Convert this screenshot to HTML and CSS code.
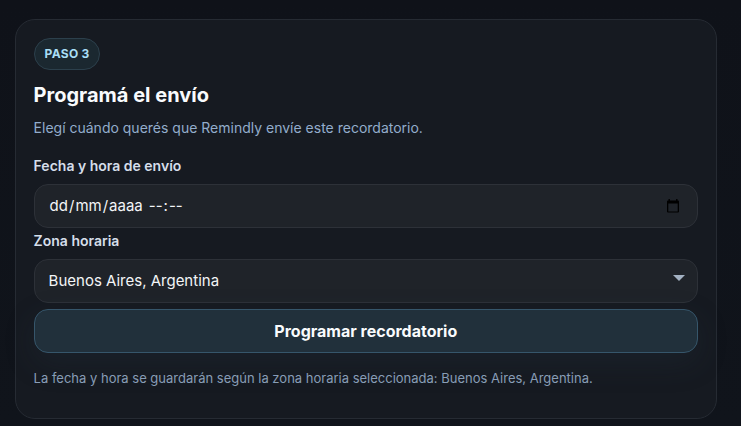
FILE: index.html
```html
<!DOCTYPE html>
<html lang="es">
<head>
    <meta charset="utf-8">
    <title>Programar recordatorio</title>
    <link rel="stylesheet" href="styles.css">
</head>
<body>
    <section class="card">
        <span class="step-pill">PASO 3</span>
        <h2 class="card-title">Programá el envío</h2>
        <p class="card-text">Elegí cuándo querés que Remindly envíe este recordatorio.</p>

        <form class="schedule-form">
            <label class="field-label">Fecha y hora de envío</label>
            <div class="field date-field">
                <span class="date-part">dd</span>/<span class="date-part">mm</span>/<span class="date-part">aaaa</span>
                <span class="time-gap"></span>
                <span class="date-part">--</span>:<span class="date-part">--</span>
                <svg class="calendar-icon" width="14" height="14" viewBox="0 0 14 14">
                    <path d="M3.2 0v2M10.8 0v2" stroke="#000" stroke-width="1.4" fill="none"/>
                    <path d="M2 1.5h10a1 1 0 0 1 1 1v10a1 1 0 0 1-1 1H2a1 1 0 0 1-1-1v-10a1 1 0 0 1 1-1zM2.3 4.6v7.8h9.4V4.6z" fill="#000" fill-rule="evenodd"/>
                </svg>
            </div>

            <label class="field-label zone-label">Zona horaria</label>
            <div class="field select-field">
                <span>Buenos Aires, Argentina</span>
                <span class="select-arrow"></span>
            </div>

            <button type="button" class="submit-button">Programar recordatorio</button>
        </form>

        <p class="card-note">La fecha y hora se guardarán según la zona horaria seleccionada: Buenos Aires, Argentina.</p>
    </section>
</body>
</html>
```

FILE: styles.css
```css
* {
    box-sizing: border-box;
}

html, body {
    height: 100%;
}

body {
    margin: 0;
    padding: 19px 24px 8px 14.6px;
    overflow: hidden;
    font-family: Inter, "Liberation Sans", sans-serif;
    background: linear-gradient(180deg, #0f1219 0%, #10141b 100%);
}

.card {
    height: 400px;
    padding: 18px;
    background: #161a21;
    border: 1px solid #262b33;
    border-radius: 20px;
}

.step-pill {
    display: inline-block;
    height: 32px;
    padding: 0 9.5px 0 10px;
    line-height: 30px;
    font-size: 12px;
    font-weight: 700;
    letter-spacing: 0.3px;
    color: #a9def5;
    background: #1b2830;
    border: 1px solid #2c404c;
    border-radius: 16px;
}

.card-title {
    margin: 12px 0 0;
    font-size: 20px;
    line-height: 26px;
    font-weight: 700;
    color: #f9fbfd;
}

.card-text {
    margin: 9px 0 0;
    font-size: 14px;
    line-height: 22px;
    color: #93adcc;
}

.schedule-form {
    margin-top: 17px;
}

.field-label {
    display: block;
    font-size: 14px;
    line-height: 20px;
    font-weight: 600;
    color: #d5deea;
}

.zone-label {
    margin-top: 3px;
}

.field {
    display: flex;
    align-items: center;
    height: 44px;
    margin-top: 8px;
    padding: 0 14px 1px;
    font-size: 15px;
    color: #f3f5f7;
    background: #1f2329;
    border: 1px solid #2d3138;
    border-radius: 14px;
}

.date-part {
    padding: 0 1px;
}

.time-gap {
    width: 4px;
}

.calendar-icon {
    margin-left: auto;
    margin-right: 3px;
}

.select-arrow {
    margin-left: auto;
    margin-right: -2px;
    margin-top: -5px;
    border-left: 6px solid transparent;
    border-right: 6px solid transparent;
    border-top: 6px solid #a3b1c2;
}

.submit-button {
    display: block;
    width: 100%;
    height: 44px;
    margin-top: 6px;
    font-family: inherit;
    font-size: 16px;
    font-weight: 700;
    color: #f9fbfd;
    background: #21303b;
    border: 1px solid #36566b;
    border-radius: 14px;
    box-shadow: 0 10px 30px rgba(40, 60, 75, 0.22);
}

.card-note {
    margin: 16px 0 0;
    font-size: 13px;
    line-height: 18px;
    color: #889db6;
}
```
